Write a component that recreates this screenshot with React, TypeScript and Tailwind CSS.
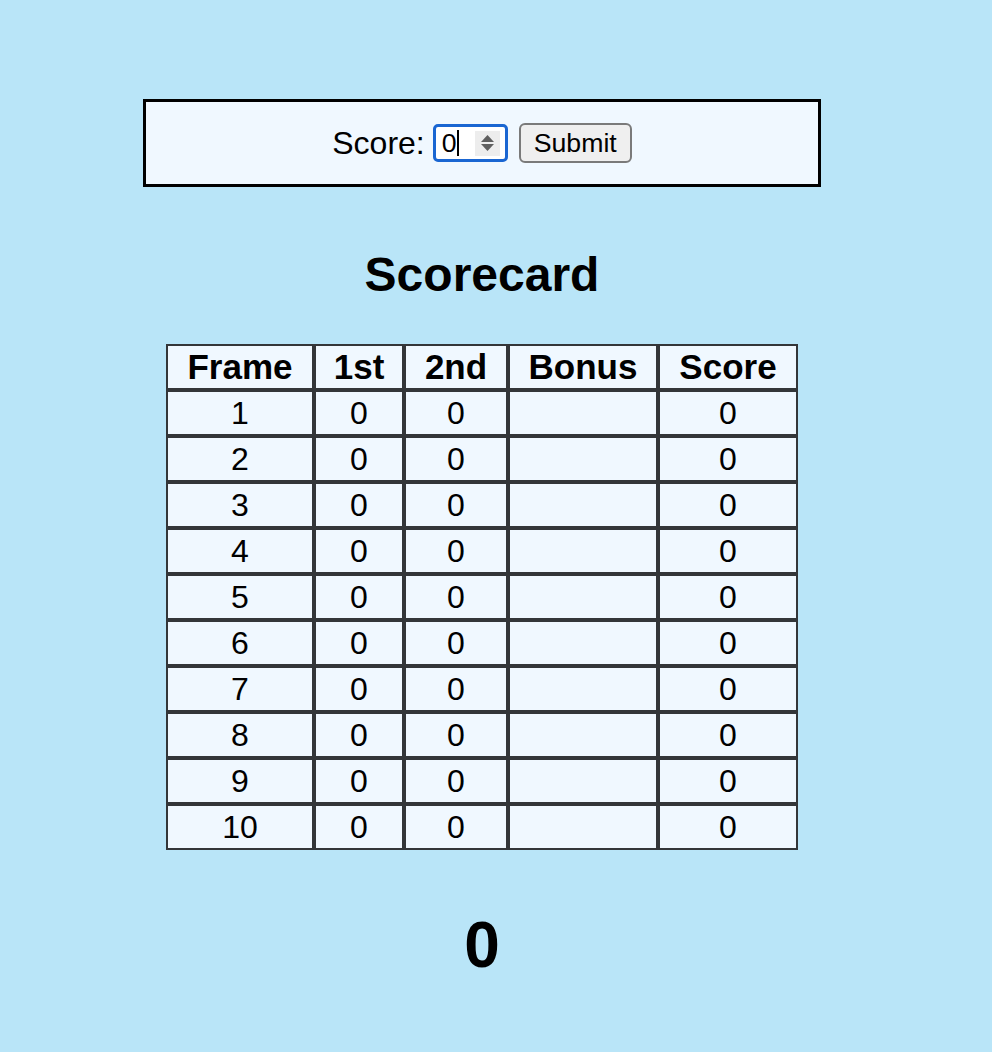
import React from "react";

const rows = Array.from({ length: 10 }, (_, i) => i + 1);
const widths = ["w-[148px]", "w-[90px]", "w-[104px]", "w-[150px]", "w-[140px]"];
const cell =
  "border-2 border-[#333639] bg-[#f0f8ff] h-[46px] p-0 text-center align-middle leading-[42px]";

export default function App() {
  return (
    <div
      className="min-h-[1052px] w-[992px] bg-[#b9e5f8] text-black"
      style={{ fontFamily: '"Liberation Sans", Arial, sans-serif' }}
    >
      <div className="w-[964px] flex flex-col items-center pt-[99px]">
        <div className="w-[678px] h-[88px] border-[3px] border-black bg-[#f0f8ff] flex items-center justify-center">
          <span className="text-[32px] leading-[38px] mr-[8px]">Score:</span>
          <div className="w-[75px] h-[38px] rounded-[5px] border-[3px] border-[#1a66d2] bg-white flex items-center pl-[6px] pr-[5px]">
            <span className="text-[26.67px] leading-[30px]">0</span>
            <span className="w-[2px] h-[26px] bg-black" />
            <div className="ml-auto w-[25px] h-[25px] bg-[#ededed] flex flex-col items-center justify-center gap-[2px]">
              <svg width="13" height="7" viewBox="0 0 13 7">
                <path d="M6.5 0 L13 7 L0 7 Z" fill="#5f5f5f" />
              </svg>
              <svg width="13" height="7" viewBox="0 0 13 7">
                <path d="M0 0 L13 0 L6.5 7 Z" fill="#5f5f5f" />
              </svg>
            </div>
          </div>
          <button className="ml-[11px] w-[113px] h-[40px] rounded-[6px] border-2 border-[#7a7a7a] bg-[#efefef] text-[26.67px] leading-[32px] text-black">
            Submit
          </button>
        </div>

        <h2 className="mt-[60px] text-[48px] leading-[56px] font-bold">Scorecard</h2>

        <table className="mt-[41px] border-separate border-spacing-0 text-[32px]">
          <thead>
            <tr>
              {["Frame", "1st", "2nd", "Bonus", "Score"].map((h, i) => (
                <th key={h} className={`${cell} ${widths[i]} font-bold text-[35px]`}>
                  {h}
                </th>
              ))}
            </tr>
          </thead>
          <tbody>
            {rows.map((r) => (
              <tr key={r}>
                <td className={`${cell} ${widths[0]}`}>{r}</td>
                <td className={`${cell} ${widths[1]}`}>0</td>
                <td className={`${cell} ${widths[2]}`}>0</td>
                <td className={`${cell} ${widths[3]}`}></td>
                <td className={`${cell} ${widths[4]}`}>0</td>
              </tr>
            ))}
          </tbody>
        </table>

        <h1 className="mt-[58px] text-[64px] leading-[74px] font-bold">0</h1>
      </div>
    </div>
  );
}
